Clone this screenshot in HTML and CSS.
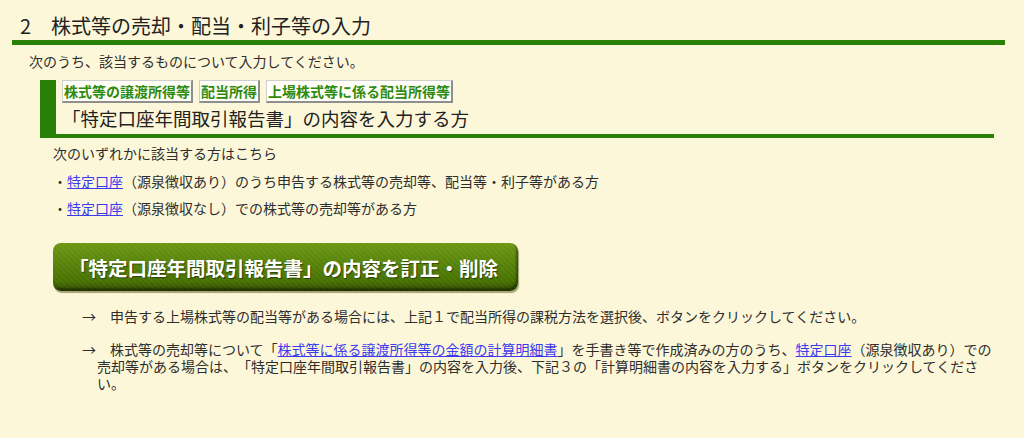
FILE: index.html
```html
<!DOCTYPE html>
<html lang="ja">
<head>
    <meta charset="UTF-8">
    <title>株式等の売却・配当・利子等の入力</title>
    <link rel="stylesheet" href="styles.css">
</head>
<body>
    <div class="page">
        <h2 class="sec-title">2　株式等の売却・配当・利子等の入力</h2>
        <p class="lead">次のうち、該当するものについて入力してください。</p>

        <div class="sub">
            <div class="tabs">
                <span class="tab">株式等の譲渡所得等</span>
                <span class="tab">配当所得</span>
                <span class="tab">上場株式等に係る配当所得等</span>
            </div>
            <h3 class="sub-title">「特定口座年間取引報告書」の内容を入力する方</h3>
        </div>

        <div class="sub-body">
            <p>次のいずれかに該当する方はこちら</p>
            <p>・<a href="#">特定口座</a>（源泉徴収あり）のうち申告する株式等の売却等、配当等・利子等がある方</p>
            <p>・<a href="#">特定口座</a>（源泉徴収なし）での株式等の売却等がある方</p>
            <button type="button" class="big-btn">「特定口座年間取引報告書」の内容を訂正・削除</button>
        </div>

        <ul class="notes">
            <li>→　申告する上場株式等の配当等がある場合には、上記１で配当所得の課税方法を選択後、ボタンをクリックしてください。</li>
            <li>→　株式等の売却等について「<a href="#">株式等に係る譲渡所得等の金額の計算明細書</a>」を手書き等で作成済みの方のうち、<a href="#">特定口座</a>（源泉徴収あり）での売却等がある場合は、「特定口座年間取引報告書」の内容を入力後、下記３の「計算明細書の内容を入力する」ボタンをクリックしてください。</li>
        </ul>
    </div>
</body>
</html>
```

FILE: styles.css
```css
body {
    margin: 0;
    background-color: #fdf7d9;
    color: #2e2e2e;
    font-family: "Noto Sans CJK JP", "Noto Sans", sans-serif;
    font-size: 14px;
    text-spacing-trim: space-all;
}
a {
    color: #3b3bf0;
}
.page {
    margin-left: 12px;
    width: 993px;
}
.sec-title {
    margin: 12px 0 0;
    padding: 0 8px;
    font-size: 20px;
    font-weight: normal;
    line-height: 28px;
    color: #222;
    border-bottom: 5px solid #2a7f06;
}
.lead {
    margin: 6px 0 0;
    padding-left: 17px;
    line-height: 20px;
}
.sub {
    margin: 9px 11px 0 28px;
    padding-left: 6px;
    border-left: 16px solid #2a7f06;
    border-bottom: 4px solid #2a7f06;
}
.tabs {
    display: flex;
    gap: 6px;
}
.tab {
    padding: 2px 1px 1px;
    background-color: #fffff8;
    border: 1px solid #cfcfcf;
    border-right: 2px solid #8e8e8e;
    border-bottom: 2px solid #8e8e8e;
    color: #2f8a10;
    font-weight: bold;
    line-height: 17px;
}
.sub-title {
    margin: 0;
    font-size: 18.5px;
    font-weight: normal;
    line-height: 31px;
    color: #222;
}
.sub-body {
    margin: 5px 0 0 41px;
}
.sub-body p {
    margin: 0;
    line-height: 20px;
}
.sub-body p + p {
    margin-top: 7.5px;
}
.big-btn {
    display: block;
    width: 465px;
    height: 48px;
    margin-top: 25px;
    padding: 0 0 0 16px;
    text-align: left;
    border: none;
    border-radius: 8px;
    background:
        repeating-linear-gradient(45deg, rgba(255, 255, 255, 0.04) 0 2px, transparent 2px 4px),
        linear-gradient(#6c9712, #57840a 40%, #467000 80%, #2f4a00);
    box-shadow: inset -2px -3px 2px rgba(0, 0, 0, 0.35), 1px 2px 1px rgba(60, 60, 0, 0.45);
    color: #fff;
    font-family: "Noto Sans CJK JP", sans-serif;
    font-size: 19.5px;
    font-weight: bold;
    text-spacing-trim: space-all;
    text-shadow: 1px 1px 1px rgba(0, 0, 0, 0.45);
    cursor: pointer;
}
.notes {
    list-style: none;
    margin: 17px 0 0;
    padding: 0 5px 0 85px;
}
.notes li {
    text-indent: -15px;
    line-height: 17px;
}
.notes li + li {
    margin-top: 16px;
}
```
